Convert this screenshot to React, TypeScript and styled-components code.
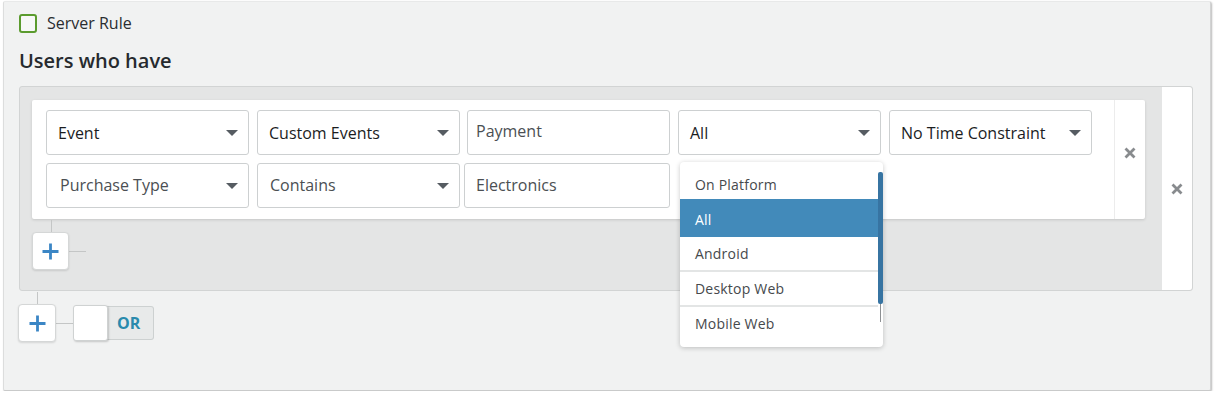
import React from "react";
import styled, { createGlobalStyle } from "styled-components";

const GlobalStyle = createGlobalStyle`
  html, body { margin: 0; padding: 0; background: #ffffff; }
  body { font-family: "Open Sans", "Liberation Sans", sans-serif; }
  * { box-sizing: border-box; }
`;

const Panel = styled.div`
  margin: 1px 0 0 3px;
  width: 1208px;
  height: 390px;
  background: #f1f2f2;
  border-left: 1px solid #dcdddd;
  border-top: 1px solid #e8e9e9;
  border-right: 1px solid #d2d3d3;
  border-bottom: 1px solid #c9caca;
  border-radius: 2px;
  box-shadow: 1px 1px 2px rgba(0, 0, 0, 0.28);
  padding: 10px 17px 0 15px;
  display: flex;
  flex-direction: column;
`;

const HeaderRow = styled.label`
  display: flex;
  align-items: center;
  gap: 10px;
  height: 22px;
  font-size: 16px;
  color: #2a2d30;
`;

const Checkbox = styled.span`
  width: 18px;
  height: 19px;
  border: 2px solid #5b9b2e;
  border-radius: 3px;
  background: #f7f8f7;
`;

const Heading = styled.h2`
  margin: 13px 0 0;
  font-size: 20px;
  line-height: 27px;
  font-weight: 600;
  color: #262a2e;
`;

const Group = styled.div`
  margin-top: 12px;
  height: 205px;
  display: flex;
  border: 1px solid #d2d4d4;
  border-radius: 3px;
  background: #e4e5e5;
`;

const GroupBody = styled.div`
  flex: 1;
  padding: 13px 17px 0 12px;
  display: flex;
  flex-direction: column;
`;

const GroupSide = styled.div`
  width: 30px;
  background: #ffffff;
  border-radius: 0 3px 3px 0;
  display: flex;
  align-items: center;
  justify-content: center;
`;

const Card = styled.div`
  height: 119px;
  display: flex;
  background: #ffffff;
  border-radius: 2px;
  box-shadow: 0 1px 3px rgba(0, 0, 0, 0.14);
`;

const Fields = styled.div`
  flex: 1;
  padding: 10px 14px 11px;
  display: flex;
  flex-direction: column;
  gap: 8px;
`;

const FieldRow = styled.div`
  display: flex;
  gap: 8px;
`;

const CardSide = styled.div`
  width: 31px;
  border-left: 1px solid #ececec;
  display: flex;
  justify-content: center;
  padding-top: 47px;
`;

const FieldBox = styled.div<{ $strong?: boolean; $pad?: number; $shift?: number; $w?: number }>`
  position: relative;
  width: ${(p) => p.$w ?? 203}px;
  height: 45px;
  margin-left: ${(p) => p.$shift ?? 0}px;
  border: 1px solid #cdd0d1;
  border-radius: 3px;
  background: #ffffff;
  display: flex;
  align-items: center;
  padding-left: ${(p) => p.$pad ?? 11}px;
  padding-right: 10px;
  font-size: 16px;
  color: ${(p) => (p.$strong ? "#1b1d1f" : "#4b4f53")};
`;

const FieldText = styled.span<{ $lift?: number }>`
  flex: 1;
  white-space: nowrap;
  position: relative;
  top: ${(p) => -(p.$lift ?? 0)}px;
`;

const Caret = styled.span`
  width: 0;
  height: 0;
  border-left: 6px solid transparent;
  border-right: 6px solid transparent;
  border-top: 6px solid #565c62;
`;

const Menu = styled.div`
  position: absolute;
  top: 51px;
  left: 1px;
  width: 203px;
  height: 185px;
  background: #ffffff;
  border-radius: 4px;
  box-shadow: 0 1px 5px rgba(0, 0, 0, 0.22);
  z-index: 10;
  padding-right: 5px;
  overflow: hidden;
`;

const MenuItem = styled.div<{ $active?: boolean; $h: number; $top?: number; $sep?: boolean }>`
  height: ${(p) => p.$h}px;
  padding: ${(p) => p.$top ?? 0}px 0 0 15px;
  display: flex;
  align-items: center;
  font-size: 14px;
  letter-spacing: 0.2px;
  color: ${(p) => (p.$active ? "#ffffff" : "#46494c")};
  background: ${(p) => (p.$active ? "#428aba" : "transparent")};
  border-bottom: ${(p) => (p.$sep ? "2px solid #e3e5e5" : "none")};
`;

const ScrollThumb = styled.span`
  position: absolute;
  right: 0;
  top: 10px;
  width: 5px;
  height: 132px;
  border-radius: 2px;
  background: #3774a2;
`;

const ScrollTrack = styled.span`
  position: absolute;
  right: 2px;
  top: 142px;
  width: 1px;
  height: 18px;
  background: #8d9093;
`;

const AddRow = styled.div<{ $mt: number; $ml?: number }>`
  margin-top: ${(p) => p.$mt}px;
  margin-left: ${(p) => p.$ml ?? 0}px;
  display: flex;
  align-items: center;
`;

const AddButton = styled.button<{ $w: number; $lineTop: number }>`
  position: relative;
  width: ${(p) => p.$w}px;
  height: 38px;
  padding: 0;
  border: 1px solid #d5d7d7;
  border-radius: 4px;
  background: #ffffff;
  box-shadow: 0 1px 2px rgba(0, 0, 0, 0.12);
  display: flex;
  align-items: center;
  justify-content: center;
  &::before {
    content: "";
    position: absolute;
    left: 50%;
    top: -${(p) => p.$lineTop + 1}px;
    width: 1px;
    height: ${(p) => p.$lineTop}px;
    background: #c4c6c6;
  }
`;

const Connector = styled.span`
  width: 17px;
  height: 1px;
  background: #c4c6c6;
`;

const Toggle = styled.div`
  display: flex;
  align-items: center;
`;

const Knob = styled.span`
  position: relative;
  z-index: 1;
  width: 35px;
  height: 36px;
  background: #ffffff;
  border: 1px solid #cfd2d2;
  border-radius: 3px;
  box-shadow: 1px 1px 2px rgba(0, 0, 0, 0.18);
`;

const OrBox = styled.span`
  margin-left: -3px;
  width: 49px;
  height: 34px;
  background: #e8eaea;
  border: 1px solid #cdd1d1;
  border-left: none;
  border-radius: 0 3px 3px 0;
  display: flex;
  align-items: center;
  padding-left: 12px;
  font-size: 16px;
  font-weight: 700;
  color: #2a8aad;
`;

const Close = () => (
  <svg width="12" height="12" viewBox="0 0 12 12">
    <path d="M1.5 1.5 L10.5 10.5 M10.5 1.5 L1.5 10.5" stroke="#888b8e" strokeWidth="2.8" />
  </svg>
);

const Plus = () => (
  <svg width="17" height="17" viewBox="0 0 17 17">
    <path d="M8.5 0.5 V16.5 M0.5 8.5 H16.5" stroke="#3b86c5" strokeWidth="2.8" />
  </svg>
);

const menuItems = [
  { label: "On Platform", h: 37, top: 8 },
  { label: "All", h: 38, top: 3, active: true },
  { label: "Android", h: 35, sep: true },
  { label: "Desktop Web", h: 35, sep: true },
  { label: "Mobile Web", h: 33 },
];

export default function App() {
  return (
    <>
      <GlobalStyle />
      <Panel>
        <HeaderRow>
          <Checkbox />
          <span>Server Rule</span>
        </HeaderRow>
        <Heading>Users who have</Heading>
        <Group>
          <GroupBody>
            <Card>
              <Fields>
                <FieldRow>
                  <FieldBox $strong>
                    <FieldText>Event</FieldText>
                    <Caret />
                  </FieldBox>
                  <FieldBox $strong>
                    <FieldText>Custom Events</FieldText>
                    <Caret />
                  </FieldBox>
                  <FieldBox $pad={8} $shift={-1}>
                    <FieldText $lift={2}>Payment</FieldText>
                  </FieldBox>
                  <FieldBox $strong>
                    <FieldText>All</FieldText>
                    <Caret />
                    <Menu>
                      {menuItems.map((m) => (
                        <MenuItem key={m.label} $h={m.h} $top={m.top} $active={m.active} $sep={m.sep}>
                          {m.label}
                        </MenuItem>
                      ))}
                      <ScrollThumb />
                      <ScrollTrack />
                    </Menu>
                  </FieldBox>
                  <FieldBox $strong>
                    <FieldText>No Time Constraint</FieldText>
                    <Caret />
                  </FieldBox>
                </FieldRow>
                <FieldRow>
                  <FieldBox $pad={13}>
                    <FieldText $lift={1}>Purchase Type</FieldText>
                    <Caret />
                  </FieldBox>
                  <FieldBox $pad={12}>
                    <FieldText $lift={1}>Contains</FieldText>
                    <Caret />
                  </FieldBox>
                  <FieldBox $shift={-4} $w={206}>
                    <FieldText $lift={1}>Electronics</FieldText>
                  </FieldBox>
                </FieldRow>
              </Fields>
              <CardSide>
                <Close />
              </CardSide>
            </Card>
            <AddRow $mt={13}>
              <AddButton $w={37} $lineTop={12}>
                <Plus />
              </AddButton>
              <Connector />
            </AddRow>
          </GroupBody>
          <GroupSide>
            <Close />
          </GroupSide>
        </Group>
        <AddRow $mt={13} $ml={-1}>
          <AddButton $w={38} $lineTop={12}>
            <Plus />
          </AddButton>
          <Connector />
          <Toggle>
            <Knob />
            <OrBox>OR</OrBox>
          </Toggle>
        </AddRow>
      </Panel>
    </>
  );
}
